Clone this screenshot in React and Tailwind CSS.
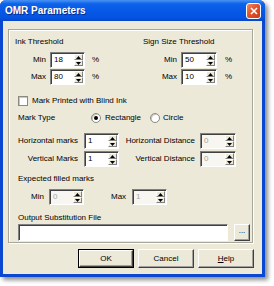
const FACE = "bg-[#ece9d8]";

function Spin({ value, className = "w-[35px]", disabled }) {
  return (
    <div
      className={`flex h-[16px] items-stretch border border-t-[#808080] border-l-[#808080] border-b-white border-r-white shadow-[inset_1px_1px_0_#404040] ${
        disabled ? "bg-[#f7f6f1] text-[#a7a69c]" : "bg-white text-black"
      } ${className}`}
    >
      <span className="pl-[3px] pt-[2px] leading-[10px]">{value}</span>
      <div className="ml-auto flex w-[10px] flex-col py-[1px] pr-[1px]">
        <div className="flex flex-1 items-center justify-center bg-[#ece9d8] border border-t-white border-l-white border-b-[#808080] border-r-[#808080]">
          <svg width="5" height="3"><path d="M0 3 L2.5 0 L5 3Z" fill="#000" /></svg>
        </div>
        <div className="flex flex-1 items-center justify-center bg-[#ece9d8] border border-t-white border-l-white border-b-[#808080] border-r-[#808080]">
          <svg width="5" height="3"><path d="M0 0 L2.5 3 L5 0Z" fill="#000" /></svg>
        </div>
      </div>
    </div>
  );
}

function Radio({ checked }) {
  return (
    <span className="flex h-[10px] w-[10px] items-center justify-center rounded-full border border-[#8a8a80] bg-white shadow-[inset_1px_1px_0_#c8c6bc]">
      {checked && <span className="h-[4px] w-[4px] rounded-full bg-black" />}
    </span>
  );
}

function Button({ children, def }) {
  return (
    <div className={`h-[19px] w-[56px] ${def ? "border border-black" : ""}`}>
      <div
        className={`flex h-full w-full items-center justify-center ${FACE} border border-t-white border-l-white border-b-[#404040] border-r-[#404040] shadow-[inset_-1px_-1px_0_#a0a0a0]`}
      >
        {children}
      </div>
    </div>
  );
}

export default function App() {
  return (
    <div className="h-[286px] w-[274px] bg-white font-['Liberation_Sans',Arial,sans-serif] text-[8px] leading-[10px] text-black">
      <div className="flex h-[277px] w-[265px] flex-col rounded-t-[6px] bg-[#0a48d2] shadow-[3px_3px_4px_rgba(0,0,0,0.45)]">
        {/* title bar */}
        <div className="flex h-[21px] items-center justify-between rounded-t-[6px] bg-[linear-gradient(180deg,#4a93f5_0%,#0d62ea_18%,#0657e6_55%,#0553e0_85%,#0846c6_100%)] pl-[5px] pr-[4px]">
          <span className="pt-[1px] text-[10px] font-bold leading-[12px] text-white [text-shadow:1px_1px_0_#0a2a8a]">
            OMR Parameters
          </span>
          <div className="flex h-[16px] w-[15px] items-center justify-center rounded-[3px] border border-white bg-[linear-gradient(135deg,#f08a63_0%,#e2542d_45%,#c93a15_100%)]">
            <svg width="8" height="8">
              <path d="M1 1 L7 7 M7 1 L1 7" stroke="#fff" strokeWidth="1.6" />
            </svg>
          </div>
        </div>

        {/* body */}
        <div className={`mx-[3px] mb-[3px] flex flex-1 flex-col ${FACE}`}>
          <div className="ml-[5px] mt-[8px] h-[214px] w-[245px] border border-[#a8a79c] shadow-[inset_1px_1px_0_#fff,1px_1px_0_#fff]">
            {/* thresholds */}
            <div className="flex pt-[7px]">
              <div className="ml-[6px] w-[128px]">
                <div className="mb-[5px]">Ink Threshold</div>
                <div className="flex flex-col gap-[1px]">
                  <div className="flex items-center">
                    <span className="w-[31px] text-right">Min</span>
                    <Spin value="18" className="ml-[4px] w-[35px]" />
                    <span className="ml-[7px]">%</span>
                  </div>
                  <div className="flex items-center">
                    <span className="w-[31px] text-right">Max</span>
                    <Spin value="80" className="ml-[4px] w-[35px]" />
                    <span className="ml-[7px]">%</span>
                  </div>
                </div>
              </div>
              <div>
                <div className="mb-[5px]">Sign Size Threshold</div>
                <div className="flex flex-col gap-[1px]">
                  <div className="flex items-center">
                    <span className="w-[34px] text-right">Min</span>
                    <Spin value="50" className="ml-[4px] w-[36px]" />
                    <span className="ml-[8px]">%</span>
                  </div>
                  <div className="flex items-center">
                    <span className="w-[34px] text-right">Max</span>
                    <Spin value="10" className="ml-[4px] w-[36px]" />
                    <span className="ml-[8px]">%</span>
                  </div>
                </div>
              </div>
            </div>

            {/* checkbox */}
            <div className="ml-[9px] mt-[11px] flex items-center">
              <span className="h-[10px] w-[10px] border border-[#8a8a80] bg-white shadow-[inset_1px_1px_0_#c8c6bc]" />
              <span className="ml-[4px]">Mark Printed with Blind Ink</span>
            </div>

            {/* mark type */}
            <div className="ml-[9px] mt-[7px] flex items-center">
              <span className="w-[73px]">Mark Type</span>
              <Radio checked />
              <span className="ml-[4px] w-[45px]">Rectangle</span>
              <Radio />
              <span className="ml-[3px]">Circle</span>
            </div>

            {/* marks grid */}
            <div className="ml-[9px] mt-[10px] grid grid-cols-[60px_35px_82px_36px] items-center gap-y-[2px]">
              <span className="text-right">Horizontal marks</span>
              <Spin value="1" className="ml-[6px] w-[35px]" />
              <span className="text-right">Horizontal Distance</span>
              <Spin value="0" disabled className="ml-[5px] w-[36px]" />
              <span className="text-right">Vertical Marks</span>
              <Spin value="1" className="ml-[6px] w-[35px]" />
              <span className="text-right">Vertical Distance</span>
              <Spin value="0" disabled className="ml-[5px] w-[36px]" />
            </div>

            {/* expected filled marks */}
            <div className="ml-[9px] mt-[7px]">Expected filled marks</div>
            <div className="ml-[22px] mt-[5px] flex items-center">
              <span className="w-[12px]">Min</span>
              <Spin value="0" disabled className="ml-[6px] w-[35px]" />
              <span className="ml-[27px] w-[18px]">Max</span>
              <Spin value="1" disabled className="ml-[3px] w-[35px]" />
            </div>

            {/* output file */}
            <div className="ml-[9px] mt-[8px]">Output Substitution File</div>
            <div className="ml-[9px] mt-[1px] flex items-center">
              <div className="h-[17px] w-[210px] border border-t-[#808080] border-l-[#808080] border-b-white border-r-white bg-white shadow-[inset_1px_1px_0_#404040]" />
              <div className="ml-[6px] flex h-[17px] w-[16px] items-center justify-center border border-t-white border-l-white border-b-[#404040] border-r-[#404040] shadow-[inset_-1px_-1px_0_#a0a0a0]">
                <span className="pb-[3px]">...</span>
              </div>
            </div>
          </div>

          {/* buttons */}
          <div className="ml-[75px] mt-[6px] flex gap-[4px]">
            <Button def>OK</Button>
            <Button>Cancel</Button>
            <Button>
              <span><span className="underline">H</span>elp</span>
            </Button>
          </div>
        </div>
      </div>
    </div>
  );
}
